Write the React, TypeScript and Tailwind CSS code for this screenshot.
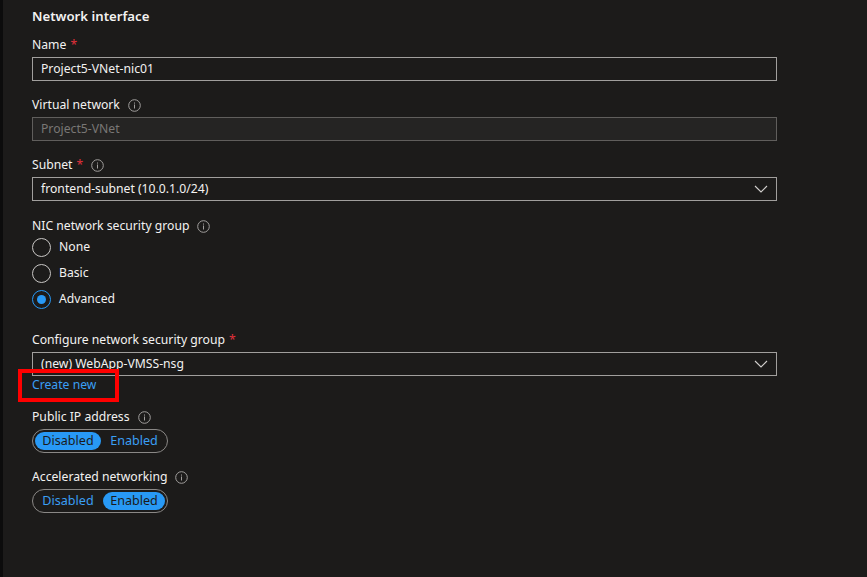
import { ReactNode } from "react";

const font = { fontFamily: '"Noto Sans", "Open Sans", sans-serif' };

function InfoIcon() {
  return (
    <svg width="13" height="13" viewBox="0 0 13 13" className="ml-2 shrink-0">
      <circle cx="6.5" cy="6.5" r="5.8" fill="none" stroke="#a19f9d" strokeWidth="1" />
      <rect x="6" y="5.5" width="1" height="4" fill="#a19f9d" />
      <rect x="6" y="3.5" width="1" height="1.1" fill="#a19f9d" />
    </svg>
  );
}

function Chevron() {
  return (
    <svg width="14" height="8" viewBox="0 0 14 8" className="shrink-0">
      <path d="M1 1l6 6 6-6" fill="none" stroke="#d2d0ce" strokeWidth="1.1" />
    </svg>
  );
}

function Label({ text, required, info }: { text: string; required?: boolean; info?: boolean }) {
  return (
    <div className="flex items-center h-5 text-[12.2px] text-[#f3f2f1]">
      <span>{text}</span>
      {required && <span className="ml-1 text-[#e3303a]">*</span>}
      {info && <InfoIcon />}
    </div>
  );
}

function TextBox({ value, disabled, select }: { value: string; disabled?: boolean; select?: boolean }) {
  return (
    <div
      className={
        disabled
          ? "mt-[2px] h-6 w-[745px] flex items-center px-2 border border-[#605e5c] bg-[#252423] text-[12.2px] text-[#797775]"
          : "mt-[2px] h-6 w-[745px] flex items-center justify-between pl-2 pr-2 border border-[#a19f9d] text-[12.2px] text-[#f3f2f1]"
      }
    >
      <span>{value}</span>
      {select && <Chevron />}
    </div>
  );
}

function Radio({ label, checked }: { label: string; checked?: boolean }) {
  return (
    <div className="flex items-center h-[26px] text-[12.2px] text-[#f3f2f1]">
      <span
        className={
          checked
            ? "w-[19px] h-[19px] rounded-full border-[1.5px] border-[#2899f5] flex items-center justify-center"
            : "w-[19px] h-[19px] rounded-full border-[1.5px] border-[#c8c6c4]"
        }
      >
        {checked && <span className="w-[9px] h-[9px] rounded-full bg-[#2899f5]" />}
      </span>
      <span className="ml-[8px]">{label}</span>
    </div>
  );
}

function Toggle({ enabled }: { enabled?: boolean }) {
  const on = "h-[18px] rounded-full bg-[#2899f5] text-[#1b1a19] flex items-center justify-center";
  const off = "h-[18px] rounded-full text-[#3a9ff5] flex items-center justify-center";
  return (
    <div className="mt-[2px] w-[136px] h-6 rounded-full border border-[#8a8886] flex items-center gap-[2px] px-[2px] text-[12.6px]">
      <span className={`w-[66px] ${enabled ? off : on}`}>Disabled</span>
      <span className={`w-[62px] ${enabled ? on : off}`}>Enabled</span>
    </div>
  );
}

function Field({ children, className }: { children: ReactNode; className?: string }) {
  return <div className={className}>{children}</div>;
}

export default function App() {
  return (
    <div className="w-[867px] h-[577px] bg-[#1c1b1a] flex overflow-hidden" style={font}>
      <div className="w-[3px] h-full bg-[#0c0c0c]" />
      <div className="pl-[29px] pt-[7px]">
        <div className="h-5 flex items-center text-[13.2px] font-semibold text-[#f3f2f1]">Network interface</div>

        <Field className="mt-2">
          <Label text="Name" required />
          <TextBox value="Project5-VNet-nic01" />
        </Field>

        <Field className="mt-[14px]">
          <Label text="Virtual network" info />
          <TextBox value="Project5-VNet" disabled />
        </Field>

        <Field className="mt-[14px]">
          <Label text="Subnet" required info />
          <TextBox value="frontend-subnet (10.0.1.0/24)" select />
        </Field>

        <Field className="mt-[15px]">
          <Label text="NIC network security group" info />
          <div className="-mt-[2px]">
            <Radio label="None" />
            <Radio label="Basic" />
            <Radio label="Advanced" checked />
          </div>
        </Field>

        <Field className="mt-[18px]">
          <Label text="Configure network security group" required />
          <TextBox value="(new) WebApp-VMSS-nsg" select />
          <div className="relative h-[18px] flex items-center text-[12.2px] text-[#3a9ff5]">
            <span>Create new</span>
            <div className="absolute left-[-14px] top-[-7px] w-[101px] h-[33px] border-4 border-[#ff0000]" />
          </div>
        </Field>

        <Field className="mt-[13px]">
          <Label text="Public IP address" info />
          <Toggle />
        </Field>

        <Field className="mt-[14px]">
          <Label text="Accelerated networking" info />
          <Toggle enabled />
        </Field>
      </div>
    </div>
  );
}
